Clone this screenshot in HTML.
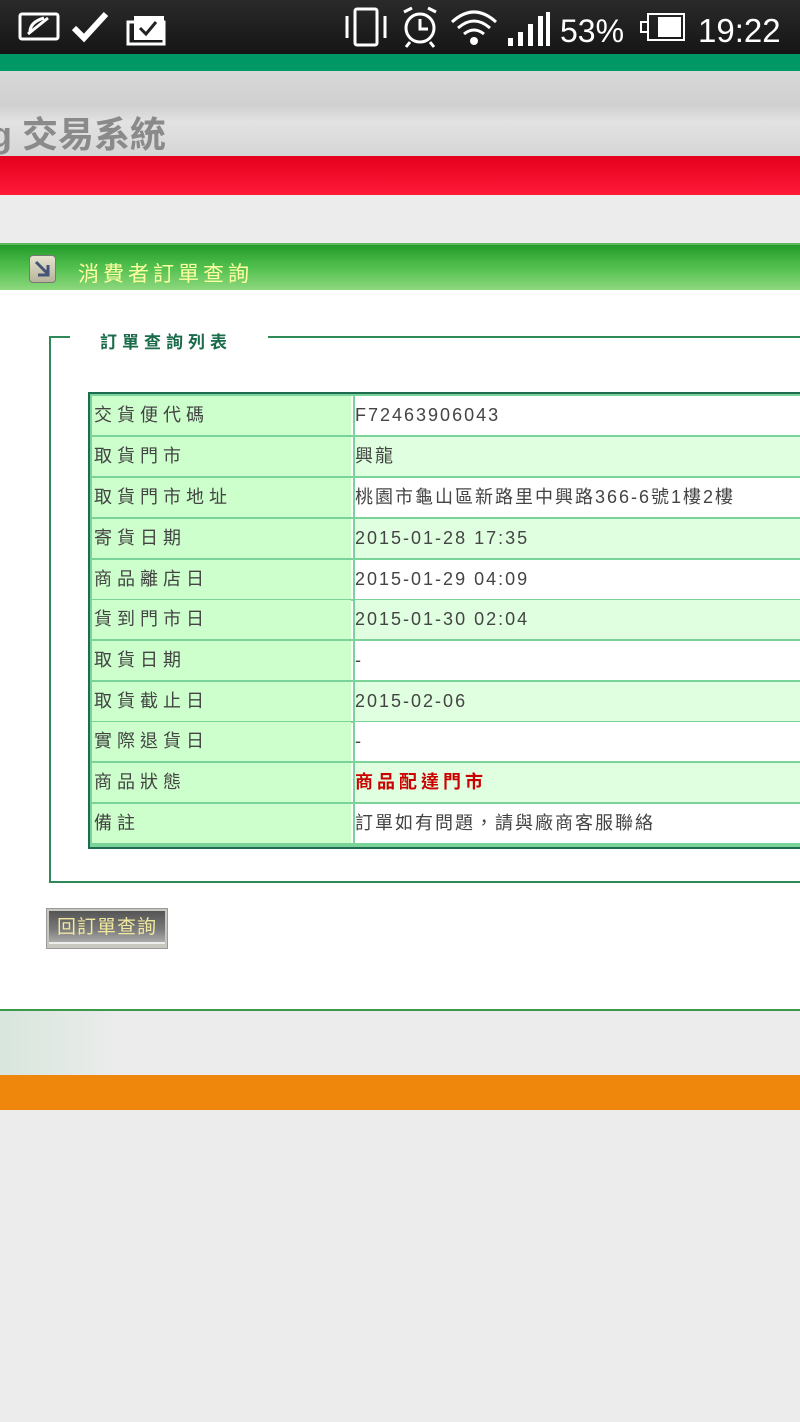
<!DOCTYPE html>
<html><head><meta charset="utf-8">
<style>
*{margin:0;padding:0;box-sizing:border-box}
body{width:800px;height:1422px;background:#ececec;position:relative;overflow:hidden;font-family:"Liberation Sans","Noto Sans CJK TC",sans-serif}
.abs{position:absolute}
.sb{left:0;top:0;width:800px;height:54px;background:linear-gradient(#2a2a2a,#151515);color:#fff}
.row{position:absolute;left:92px;width:708px;height:41px;border-bottom:2px solid #7ad49a}
.lab{position:absolute;left:0;top:0;width:259px;height:39px;background:#ccffcc;color:#444;font-size:18px;line-height:38px;padding-left:2px;letter-spacing:5px}
.val{position:absolute;left:261px;top:0;width:460px;height:39px;border-left:2px solid #7ad49a;color:#444;font-size:18px;line-height:38px;padding-left:0;letter-spacing:2px}
</style></head><body>
<div class="abs sb">
  <svg width="800" height="54" style="position:absolute;left:0;top:0">
    <g fill="none" stroke="#fff" stroke-width="3">
      <rect x="20" y="14" width="38" height="25" rx="2"/>
      <path d="M28 34 L48 18 M30 32 Q30 22 44 18"/>
    </g>
    <path d="M74 28 L84 38 L106 14" stroke="#fff" stroke-width="6" fill="none"/>
    <rect x="128" y="22" width="36" height="22" fill="none" stroke="#fff" stroke-width="3"/>
    <rect x="134" y="16" width="30" height="24" fill="#fff"/>
    <path d="M140 28 L146 34 L156 22" stroke="#222" stroke-width="3" fill="none"/>
    <g fill="none" stroke="#fff" stroke-width="3">
      <rect x="355" y="9" width="22" height="36" rx="2"/>
      <path d="M347 16 V38 M385 16 V38"/>
      <circle cx="420" cy="28" r="14"/>
      <path d="M420 19 V29 H428 M404 12 L412 8 M436 12 L428 8 M410 42 L406 47 M430 42 L434 47"/>
      <path d="M452 22 Q474 2 496 22 M458 28 Q474 14 490 28 M464 34 Q474 26 484 34"/>
    </g>
    <circle cx="474" cy="41" r="4" fill="#fff"/>
    <g fill="#fff">
      <rect x="508" y="38" width="5" height="8"/><rect x="518" y="32" width="5" height="14"/>
      <rect x="528" y="24" width="5" height="22"/><rect x="538" y="16" width="5" height="30"/><rect x="546" y="12" width="4" height="34"/>
      <rect x="648" y="14" width="36" height="26" fill="none" stroke="#fff" stroke-width="2"/>
      <rect x="658" y="17" width="23" height="20"/>
      <rect x="641" y="22" width="7" height="10" fill="none" stroke="#fff" stroke-width="2"/>
    </g>
    <text x="560" y="42" font-size="32" fill="#fff" font-family="Liberation Sans">53%</text>
    <text x="698" y="42" font-size="33" fill="#fff" font-family="Liberation Sans">19:22</text>
  </svg>
</div>
<div class="abs" style="left:0;top:54px;width:800px;height:17px;background:#009966"></div>
<div class="abs" style="left:0;top:71px;width:800px;height:85px;background:linear-gradient(#d8d8d8,#d0d0d0 40%,#e2e2e2 60%,#d6d6d6)"></div>
<div class="abs" style="left:-10px;top:106px;font-size:36px;color:#8a8a8a;font-weight:bold;letter-spacing:0px">g 交易系統</div>
<div class="abs" style="left:0;top:156px;width:800px;height:39px;background:linear-gradient(#e5001c,#ff1a3a)"></div>
<div class="abs" style="left:0;top:195px;width:800px;height:48px;background:#ececec"></div>
<div class="abs" style="left:0;top:243px;width:800px;height:2px;background:#5cb85c"></div>
<div class="abs" style="left:0;top:245px;width:800px;height:45px;background:linear-gradient(#239a2a,#52c04e 50%,#8ed87e)"></div>
<div class="abs" style="left:29px;top:255px;width:27px;height:28px;border-radius:4px;background:linear-gradient(#e6e3cf,#b8b49a);border:1px solid #777">
  <svg width="25" height="26"><path d="M6 6 L18 18 M8 19 H18 V9" stroke="#445577" stroke-width="3" fill="none"/></svg>
</div>
<div class="abs" style="left:78px;top:258px;font-size:21px;color:#ffffa0;letter-spacing:4px">消費者訂單查詢</div>
<div class="abs" style="left:0;top:290px;width:800px;height:720px;background:#fff"></div>
<div class="abs" style="left:49px;top:336px;width:760px;height:547px;border:2px solid #2e8b57;border-right:none"></div>
<div class="abs" style="left:70px;top:326px;width:198px;height:24px;background:#fff"></div>
<div class="abs" style="left:100px;top:328px;font-size:17px;color:#1a6b4a;font-weight:bold;letter-spacing:5px">訂單查詢列表</div>
<div class="abs" style="left:88px;top:392px;width:720px;height:457px;border:2px solid #1f6b50;border-right:none"></div>
<div class="abs" style="left:90px;top:394px;width:720px;height:453px;border:2px solid #7ad49a;border-right:none"></div>
<div class="row" style="top:396px"><div class="lab">交貨便代碼</div><div class="val" style="background:#fff">F72463906043</div></div>
<div class="row" style="top:437px"><div class="lab">取貨門市</div><div class="val" style="background:#e0ffe0">興龍</div></div>
<div class="row" style="top:478px"><div class="lab">取貨門市地址</div><div class="val" style="background:#fff">桃園市龜山區新路里中興路366-6號1樓2樓</div></div>
<div class="row" style="top:519px"><div class="lab">寄貨日期</div><div class="val" style="background:#e0ffe0">2015-01-28 17:35</div></div>
<div class="row" style="top:560px"><div class="lab">商品離店日</div><div class="val" style="background:#fff">2015-01-29 04:09</div></div>
<div class="row" style="top:600px"><div class="lab">貨到門市日</div><div class="val" style="background:#e0ffe0">2015-01-30 02:04</div></div>
<div class="row" style="top:641px"><div class="lab">取貨日期</div><div class="val" style="background:#fff">-</div></div>
<div class="row" style="top:682px"><div class="lab">取貨截止日</div><div class="val" style="background:#e0ffe0">2015-02-06</div></div>
<div class="row" style="top:722px"><div class="lab">實際退貨日</div><div class="val" style="background:#fff">-</div></div>
<div class="row" style="top:763px"><div class="lab">商品狀態</div><div class="val" style="background:#e0ffe0;color:#cc0000;font-weight:bold;letter-spacing:4px">商品配達門市</div></div>
<div class="row" style="top:804px"><div class="lab">備註</div><div class="val" style="background:#fff">訂單如有問題，請與廠商客服聯絡</div></div>
<div class="abs" style="left:46px;top:908px;width:122px;height:41px;background:#c8c8c0;border:1px solid #999"></div>
<div class="abs" style="left:49px;top:911px;width:116px;height:33px;background:linear-gradient(#555,#7a7a7a 60%,#aaa);border-bottom:2px solid #eee;color:#f0e8a0;font-size:19px;line-height:33px;text-align:center;letter-spacing:1px">回訂單查詢</div>
<div class="abs" style="left:0;top:1009px;width:800px;height:2px;background:#3a9a4a"></div>
<div class="abs" style="left:0;top:1011px;width:800px;height:64px;background:linear-gradient(90deg,#d8e6dc,#ececec 120px)"></div>
<div class="abs" style="left:0;top:1075px;width:800px;height:35px;background:#ee870c"></div>
</body></html>
